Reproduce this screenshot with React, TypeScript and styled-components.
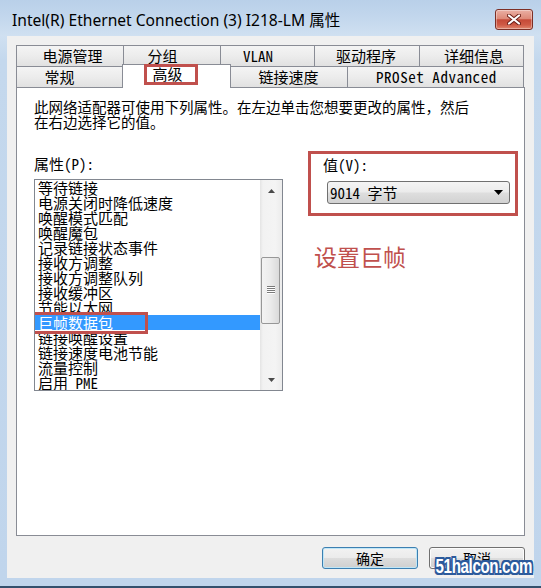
import React from 'react';
import styled, { createGlobalStyle, css } from 'styled-components';

const SONG = `"Noto Sans Mono CJK SC", "Noto Sans CJK SC", "Liberation Mono", monospace`;
const UI = `"Noto Sans CJK SC", "Noto Sans", sans-serif`;
const RED = '#c0504d';
const EDGE = '#898c95';

const GlobalStyle = createGlobalStyle`
  html, body { margin: 0; padding: 0; }
  body { width: 541px; height: 588px; overflow: hidden; background: #bfd4eb; }
`;

const Window = styled.div`
  position: relative;
  box-sizing: border-box;
  width: 541px;
  height: 588px;
  display: flex;
  flex-direction: column;
  padding: 0 7px 8px 7px;
  background: linear-gradient(180deg, #b9d0e9 0px, #c3d7ed 18px, #d0e0f1 36px, #c4d8ed 60px, #c0d5ec 100%);
  border-bottom: 2px solid #34506d;
`;

const TitleBar = styled.div`
  height: 36px;
  flex: 0 0 36px;
  display: flex;
  align-items: flex-start;
  padding-left: 5px;
`;

const Title = styled.div`
  margin-top: 9px;
  font-family: "Noto Sans", "Noto Sans CJK SC", sans-serif;
  font-size: 15.6px;
  line-height: 22px;
  color: #000;
  white-space: nowrap;
`;

const CloseBtn = styled.div`
  margin-left: auto;
  margin-top: 9px;
  margin-right: 1px;
  width: 38px;
  height: 21px;
  box-sizing: border-box;
  border: 1px solid #7d2f26;
  border-radius: 3px;
  background: linear-gradient(180deg, #eab0a4 0%, #de8a79 45%, #c54a38 52%, #cf5a45 78%, #e08870 100%);
  box-shadow: inset 0 0 0 1px rgba(255, 255, 255, 0.35);
  display: flex;
  align-items: center;
  justify-content: center;
`;

const Client = styled.div`
  flex: 1 1 auto;
  display: flex;
  flex-direction: column;
  box-sizing: border-box;
  padding: 9px 9px 9px 9px;
  background: #f0f0f0;
`;

const TabRow = styled.div`
  display: flex;
  height: 21px;
  flex: 0 0 21px;
`;

const Tab = styled.div<{ $w: number; $pad: number; $ls?: number; $sel?: boolean; $last?: boolean }>`
  box-sizing: border-box;
  width: ${(p) => p.$w}px;
  flex: 0 0 auto;
  display: flex;
  align-items: center;
  padding-left: ${(p) => p.$pad}px;
  padding-bottom: 1px;
  border-left: 1px solid ${EDGE};
  border-top: 1px solid ${EDGE};
  border-right: ${(p) => (p.$last ? `1px solid ${EDGE}` : 'none')};
  background: linear-gradient(180deg, #f4f4f4 0%, #ececec 50%, #e1e1e1 100%);
  font-family: ${SONG};
  font-size: 15px;
  line-height: 15px;
  letter-spacing: ${(p) => p.$ls ?? 0}px;
  color: #000;
  white-space: nowrap;
  ${(p) =>
    p.$sel &&
    css`
      position: relative;
      z-index: 2;
      margin: -2px -2px -1px -2px;
      border-right: 1px solid ${EDGE};
      background: #fff;
      align-items: flex-start;
      padding-top: 1px;
      padding-bottom: 0;
    `}
`;

const Marked = styled.span<{ $l: number; $t: number; $w: number; $h: number }>`
  position: relative;
  display: inline-block;
  &::after {
    content: '';
    position: absolute;
    left: ${(p) => p.$l}px;
    top: ${(p) => p.$t}px;
    width: ${(p) => p.$w}px;
    height: ${(p) => p.$h}px;
    box-sizing: border-box;
    border: 3px solid ${RED};
    pointer-events: none;
  }
`;

const Panel = styled.div`
  flex: 1 1 auto;
  display: flex;
  flex-direction: column;
  box-sizing: border-box;
  background: #fff;
  border: 1px solid ${EDGE};
  padding: 12px 17px 0 17px;
  font-family: ${SONG};
  font-size: 15px;
  color: #000;
`;

const Intro = styled.div`
  font-size: 14.5px;
  line-height: 14.5px;
  white-space: nowrap;
`;

const ContentRow = styled.div`
  display: flex;
  align-items: flex-start;
  margin-top: 22px;
`;

const LeftCol = styled.div`
  display: flex;
  flex-direction: column;
  padding-top: 5px;
  width: 249px;
`;

const FieldLabel = styled.div`
  line-height: 15px;
  height: 15px;
  white-space: nowrap;
`;

const ListBox = styled.div`
  margin-top: 8px;
  box-sizing: border-box;
  width: 249px;
  height: 212px;
  border: 1px solid #828790;
  display: flex;
  background: #fff;
  overflow: hidden;
`;

const Items = styled.div`
  flex: 1 1 auto;
  display: flex;
  flex-direction: column;
`;

const Item = styled.div<{ $sel?: boolean }>`
  height: 15px;
  line-height: 15px;
  padding-left: 3px;
  white-space: nowrap;
  color: ${(p) => (p.$sel ? '#fff' : '#000')};
  background: ${(p) => (p.$sel ? '#3399ff' : 'transparent')};
`;

const ScrollBar = styled.div`
  width: 22px;
  flex: 0 0 22px;
  display: flex;
  flex-direction: column;
  background: linear-gradient(90deg, #e4e4e4 0px, #f2f2f2 3px, #f4f4f4 70%, #ececec 100%);
`;

const ArrowBtn = styled.div`
  height: 21px;
  flex: 0 0 21px;
  display: flex;
  align-items: center;
  justify-content: center;
`;

const Track = styled.div`
  flex: 1 1 auto;
  display: flex;
  flex-direction: column;
`;

const Thumb = styled.div`
  margin-top: 56px;
  margin-left: 1px;
  width: 19px;
  height: 67px;
  box-sizing: border-box;
  border: 1px solid #979797;
  border-radius: 2px;
  background: linear-gradient(90deg, #f3f3f3 0%, #ebebeb 50%, #dadada 100%);
  display: flex;
  align-items: center;
  justify-content: center;
`;

const RightCol = styled.div`
  margin-left: 25px;
  display: flex;
  flex-direction: column;
`;

const ValueBox = styled.div`
  box-sizing: border-box;
  width: 210px;
  border: 3px solid ${RED};
  padding: 3px 5px 9px 12px;
  display: flex;
  flex-direction: column;
`;

const Select = styled.div`
  margin-top: 9px;
  margin-left: 4px;
  box-sizing: border-box;
  width: 183px;
  height: 23px;
  border: 1px solid #707070;
  border-radius: 3px;
  background: linear-gradient(180deg, #f4f4f4 0%, #ebebeb 48%, #dedede 52%, #d2d2d2 100%);
  display: flex;
  align-items: center;
  padding-left: 2px;
  padding-right: 6px;
  line-height: 15px;
  white-space: nowrap;
`;

const SelectArrow = styled.svg`
  margin-left: auto;
`;

const Annotation = styled.div`
  margin-top: 27px;
  margin-left: 6px;
  font-family: ${UI};
  font-size: 23px;
  line-height: 26px;
  color: ${RED};
  white-space: nowrap;
`;

const ButtonRow = styled.div`
  display: flex;
  justify-content: flex-end;
  gap: 11px;
  margin-top: 11px;
  height: 22px;
  flex: 0 0 22px;
`;

const Button = styled.div<{ $default?: boolean }>`
  width: 96px;
  box-sizing: border-box;
  border: 1px solid ${(p) => (p.$default ? '#3c7fb1' : '#707070')};
  border-radius: 3px;
  background: linear-gradient(180deg, #f2f2f2 0%, #ebebeb 50%, #dddddd 51%, #cfcfcf 100%);
  box-shadow: ${(p) => (p.$default ? 'inset 0 0 0 1px #bfe6f7' : 'inset 0 0 0 1px #fcfcfc')};
  display: flex;
  align-items: center;
  justify-content: center;
  font-family: ${UI};
  font-size: 14px;
  color: #000;
`;

const Watermark = styled.div`
  position: absolute;
  right: 9px;
  bottom: 8px;
  font-family: "Liberation Sans", sans-serif;
  font-weight: 700;
  font-size: 21px;
  line-height: 24px;
  letter-spacing: -0.5px;
  color: #fff;
  transform: scaleX(0.72);
  transform-origin: right center;
  text-shadow: -2px 0 #2b5a9c, 2px 0 #2b5a9c, 0 -2px #2b5a9c, 0 2px #2b5a9c, -2px -2px #2b5a9c, 2px 2px #2b5a9c,
    -2px 2px #2b5a9c, 2px -2px #2b5a9c;
`;

const row1 = [
  { label: '电源管理', w: 107, pad: 25.5 },
  { label: '分组', w: 97, pad: 23.5 },
  { label: 'VLAN', w: 94, pad: 22 },
  { label: '驱动程序', w: 105, pad: 21 },
  { label: '详细信息', w: 105, pad: 24 },
];

const row2 = [
  { label: '常规', w: 108, pad: 27.5 },
  { label: '高级', w: 109, pad: 29.5, sel: true },
  { label: '链接速度', w: 118, pad: 28.5 },
  { label: 'PROSet Advanced', w: 177, pad: 28, ls: 0.55 },
];

const props = [
  '等待链接',
  '电源关闭时降低速度',
  '唤醒模式匹配',
  '唤醒魔包',
  '记录链接状态事件',
  '接收方调整',
  '接收方调整队列',
  '接收缓冲区',
  '节能以太网',
  '巨帧数据包',
  '链接唤醒设置',
  '链接速度电池节能',
  '流量控制',
  '启用 PME',
];

const Tri = ({ up }: { up?: boolean }) => (
  <svg width="7" height="4" viewBox="0 0 7 4">
    <path d={up ? 'M0 4 L3.5 0 L7 4 Z' : 'M0 0 L3.5 4 L7 0 Z'} fill="#4a4a4a" />
  </svg>
);

export default function App() {
  return (
    <>
      <GlobalStyle />
      <Window>
        <TitleBar>
          <Title>Intel(R) Ethernet Connection (3) I218-LM 属性</Title>
          <CloseBtn>
            <svg width="14" height="11" viewBox="0 0 14 11">
              <path d="M2 1.5 L12 9.5 M12 1.5 L2 9.5" stroke="#6b1d15" strokeWidth="4" strokeLinecap="round" />
              <path d="M2 1.5 L12 9.5 M12 1.5 L2 9.5" stroke="#fff" strokeWidth="2.2" strokeLinecap="round" />
            </svg>
          </CloseBtn>
        </TitleBar>
        <Client>
          <TabRow>
            {row1.map((t, i) => (
              <Tab key={t.label} $w={t.w} $pad={t.pad} $last={i === row1.length - 1}>
                {t.label}
              </Tab>
            ))}
          </TabRow>
          <TabRow>
            {row2.map((t, i) => (
              <Tab key={t.label} $w={t.w} $pad={t.pad} $ls={t.ls} $sel={t.sel} $last={i === row2.length - 1}>
                {t.sel ? (
                  <Marked $l={-8.5} $t={-2} $w={54} $h={21}>
                    {t.label}
                  </Marked>
                ) : (
                  t.label
                )}
              </Tab>
            ))}
          </TabRow>
          <Panel>
            <Intro>
              此网络适配器可使用下列属性。在左边单击您想要更改的属性，然后
              <br />
              在右边选择它的值。
            </Intro>
            <ContentRow>
              <LeftCol>
                <FieldLabel>属性(P):</FieldLabel>
                <ListBox>
                  <Items>
                    {props.map((p) => (
                      <Item key={p} $sel={p === '巨帧数据包'}>
                        {p === '巨帧数据包' ? (
                          <Marked $l={-8} $t={-3} $w={118} $h={22}>
                            {p}
                          </Marked>
                        ) : (
                          p
                        )}
                      </Item>
                    ))}
                  </Items>
                  <ScrollBar>
                    <ArrowBtn>
                      <Tri up />
                    </ArrowBtn>
                    <Track>
                      <Thumb>
                        <svg width="8" height="9" viewBox="0 0 8 9">
                          <path d="M0 0.5 H8 M0 2.5 H8 M0 4.5 H8 M0 6.5 H8" stroke="#7a7a7a" strokeWidth="1" />
                          <path d="M0 1.5 H8 M0 3.5 H8 M0 5.5 H8 M0 7.5 H8" stroke="#ffffff" strokeWidth="1" />
                        </svg>
                      </Thumb>
                    </Track>
                    <ArrowBtn>
                      <Tri />
                    </ArrowBtn>
                  </ScrollBar>
                </ListBox>
              </LeftCol>
              <RightCol>
                <ValueBox>
                  <FieldLabel>值(V):</FieldLabel>
                  <Select>
                    9014 字节
                    <SelectArrow width="9" height="5" viewBox="0 0 9 5">
                      <path d="M0 0 L9 0 L4.5 5 Z" fill="#000" />
                    </SelectArrow>
                  </Select>
                </ValueBox>
                <Annotation>设置巨帧</Annotation>
              </RightCol>
            </ContentRow>
          </Panel>
          <ButtonRow>
            <Button $default>确定</Button>
            <Button>取消</Button>
          </ButtonRow>
        </Client>
        <Watermark>51halcon.com</Watermark>
      </Window>
    </>
  );
}
